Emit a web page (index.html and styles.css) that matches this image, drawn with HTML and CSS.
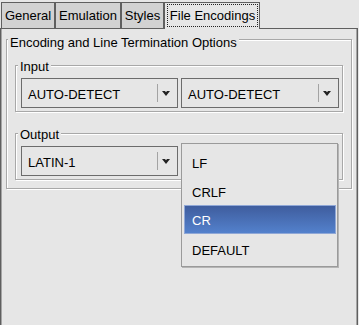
FILE: index.html
```html
<!DOCTYPE html>
<html>
<head>
<meta charset="utf-8">
<link rel="stylesheet" href="styles.css">
</head>
<body>
<div class="tabbar">
  <div class="tab tab-general">General</div>
  <div class="tab tab-emulation">Emulation</div>
  <div class="tab tab-styles">Styles</div>
  <div class="tab tab-file active"><span class="focus">File Encodings</span></div>
</div>
<div class="panel">
  <fieldset class="group outer">
    <legend class="title outer-title">Encoding and Line Termination Options</legend>
    <div class="outer-body">
      <fieldset class="group inner">
        <legend class="title inner-title">Input</legend>
        <div class="inner-body">
          <div class="combo combo-a"><span class="val">AUTO-DETECT</span><span class="sep"></span><span class="arrowbox"><svg class="arrow" width="8" height="5" viewBox="0 0 8 5"><polygon points="0,0 3,0 4,1.2 5,0 8,0 4,5" fill="#222"/></svg></span></div>
          <div class="combo combo-b"><span class="val">AUTO-DETECT</span><span class="sep"></span><span class="arrowbox"><svg class="arrow" width="8" height="5" viewBox="0 0 8 5"><polygon points="0,0 3,0 4,1.2 5,0 8,0 4,5" fill="#222"/></svg></span></div>
        </div>
      </fieldset>
      <fieldset class="group inner output">
        <legend class="title inner-title">Output</legend>
        <div class="inner-body">
          <div class="combo combo-a"><span class="val">LATIN-1</span><span class="sep"></span><span class="arrowbox"><svg class="arrow" width="8" height="5" viewBox="0 0 8 5"><polygon points="0,0 3,0 4,1.2 5,0 8,0 4,5" fill="#222"/></svg></span></div>
          <div class="combo combo-b"><span class="val"></span><span class="sep"></span><span class="arrowbox"><svg class="arrow" width="8" height="5" viewBox="0 0 8 5"><polygon points="0,0 3,0 4,1.2 5,0 8,0 4,5" fill="#222"/></svg></span></div>
        </div>
      </fieldset>
    </div>
  </fieldset>
</div>
<div class="popup">
  <div class="item">LF</div>
  <div class="item">CRLF</div>
  <div class="item sel">CR</div>
  <div class="item">DEFAULT</div>
</div>
</body>
</html>
```

FILE: styles.css
```css
* { box-sizing: border-box; }

html, body {
  margin: 0;
  background: #e6e6e6;
}

body {
  width: 359px;
  height: 325px;
  overflow: hidden;
  position: relative;
  font: 13px/15px "Liberation Sans", Arial, sans-serif;
  color: #000;
}

/* ---------- tabs ---------- */
.tabbar {
  display: flex;
  align-items: flex-end;
  height: 28px;
  padding-left: 1px;
}

.tab {
  height: 26px;
  border: 1px solid #5f5f5f;
  border-bottom: 0;
  background: #d2d2d2;
  display: flex;
  align-items: center;
  justify-content: center;
  white-space: nowrap;
}

.tab-general { width: 54px; }
.tab-emulation { width: 66px; }
.tab-styles { width: 43px; }
.tab-file { width: 96px; }

.tab.active {
  height: 27px;
  margin-bottom: -1px;
  background: #e6e6e6;
  position: relative;
  z-index: 1;
  padding: 1px 1px 2px 2px;
  align-items: stretch;
}

.focus {
  flex: 1;
  border: 1px dotted #222;
  display: flex;
  align-items: center;
  justify-content: center;
}

/* ---------- panel ---------- */
.panel {
  width: 358px;
  height: 310px;
  border: 1px solid #5f5f5f;
  box-shadow: inset 1px 0 0 #a5a5a5, inset -1px 0 0 #a5a5a5;
  padding: 1px 5px 0 5px;
}

.group {
  margin: 0;
  padding: 0;
  min-width: 0;
  border: 1px solid #a8a8a8;
  box-shadow: inset 1px 1px 0 #fff, 1px 1px 0 #fff;
}

.title {
  line-height: 13px;
  background: #e6e6e6;
}

.outer-title {
  margin-left: 1px;
  padding: 6px 2px 0;
}

.inner-title {
  margin-left: 2px;
  padding: 3px 2px 1px;
}

.outer-body {
  padding: 8px 8px 8px;
}

.inner-body {
  display: flex;
  gap: 3px;
  padding: 4px 3px 3px 5px;
}

.output { margin-top: 13px; }

/* ---------- combo ---------- */
.combo {
  height: 30px;
  border: 1px solid #6c6c6c;
  display: flex;
  align-items: center;
  background: #e6e6e6;
}

.combo-a { width: 157px; }
.combo-b { width: 158px; }

.val {
  flex: 1;
  padding: 2px 0 0 6px;
  white-space: nowrap;
}

.sep {
  width: 1px;
  height: 18px;
  margin-top: -1px;
  background: #a3a3a3;
}

.arrowbox {
  width: 19px;
  display: flex;
  align-items: center;
  padding-left: 4px;
}

.arrow { display: block; }

/* ---------- popup ---------- */
.popup {
  position: absolute;
  left: 181px;
  top: 143px;
  width: 157px;
  height: 124px;
  border: 1px solid #9a9a9a;
  background: #e6e6e6;
  padding: 3px 1px 3px 2px;
  box-shadow: 1px 1px 0 #b5b5b5;
  z-index: 2;
}

.item {
  height: 29px;
  display: flex;
  align-items: center;
  padding: 3px 0 0 8px;
}

.item.sel {
  background: linear-gradient(#3f5d9e, #5381cc);
  border: 1px solid #8fa7d6;
  color: #fff;
  padding: 2px 0 0 7px;
}
```
